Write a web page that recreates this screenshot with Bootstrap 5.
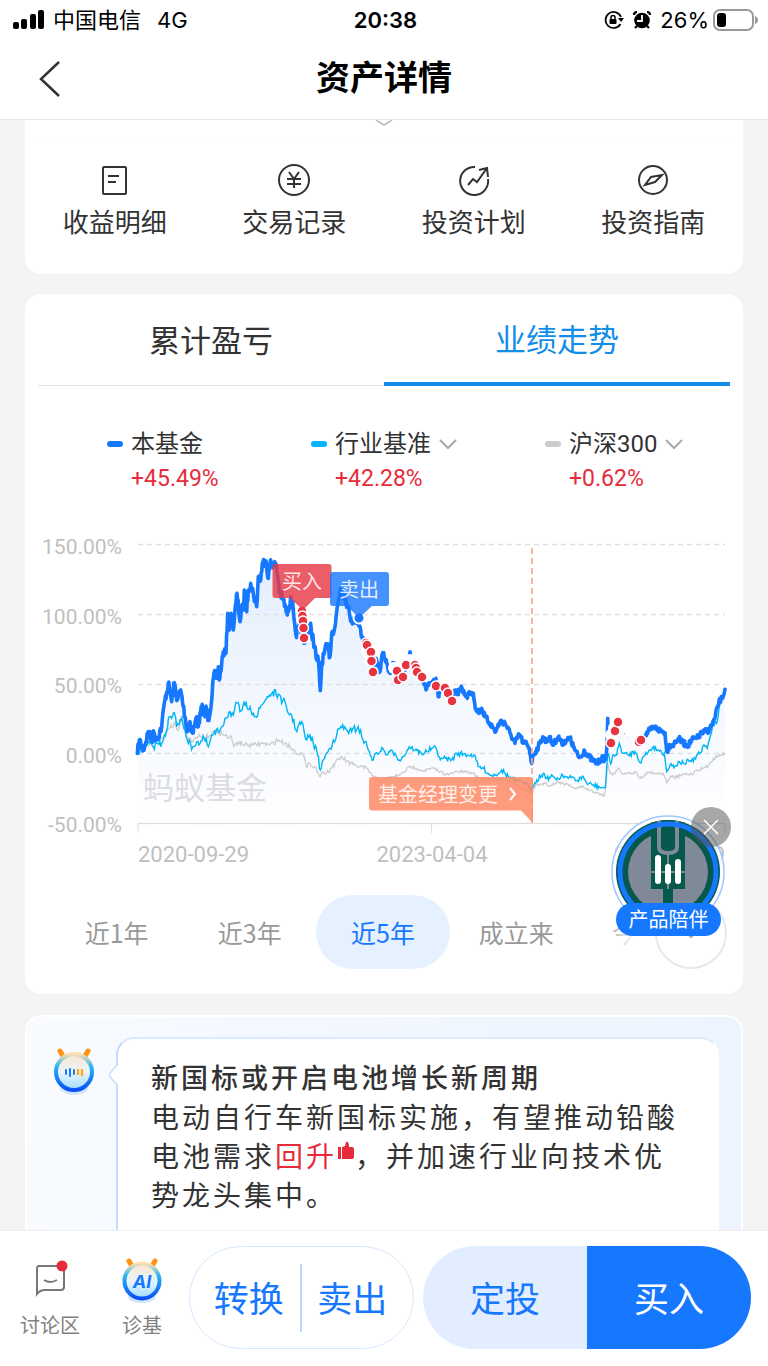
<!DOCTYPE html>
<html lang="zh-CN">
<head>
<meta charset="utf-8">
<meta name="viewport" content="width=device-width, initial-scale=1">
<title>资产详情</title>
<link href="https://cdn.jsdelivr.net/npm/bootstrap@5.3.0/dist/css/bootstrap.min.css" rel="stylesheet">
<style>
  :root { --blue: #1677ff; --tab: #108ee9; --red: #e62c3b; --ink: #333; }
  body { font-family: Inter, "Noto Sans CJK SC", sans-serif; color: var(--ink); background: #f4f4f4; line-height: 1; }
  a { color: inherit; text-decoration: none; }
  button { background: none; border: 0; padding: 0; color: inherit; }
  svg { display: block; flex: none; }
  .app { height: 100vh; }
  .status-row { height: 40px; padding: 0 10px 0 13px; font-size: 22px; color: #000; }
  .status-row > div { flex: 1 1 0; }
  .clock { font-weight: 600; }
  .title-row { height: 79px; padding: 0 0 2px 38px; }
  .title-row h1 { font-size: 34px; font-weight: 700; color: #000; }
  .top-area { border-bottom: 1px solid #e5e5e5; }
  .feed { padding: 0 25px; min-height: 0; }
  .panel { background: #fff; border-radius: 16px; margin-bottom: 21px; }
  .panel-first { border-radius: 0 0 16px 16px; height: 154px; margin-bottom: 20px; }
  .fold { height: 21px; border-bottom: 1px solid #fafafa; }
  .shortcut { font-size: 26px; gap: 12px; padding-top: 21px; }
  .perf-tabs { margin: 0 13px; height: 92px; }
  .perf-tabs button { font-size: 31px; padding-top: 2px; border-bottom: 1px solid #e5e5e5; flex: 1 1 0; }
  .perf-tabs button.on { color: var(--tab); border-bottom: 4px solid var(--tab); }
  .legend-grid { display: grid; grid-template-columns: 204fr 234fr 173fr; padding: 44px 25px 0 82px; }
  .legend-name { font: 24px/28px Roboto, "Noto Sans CJK SC", sans-serif; gap: 8px; }
  .legend-rate { font: 23px/28px Roboto, sans-serif; color: var(--red); margin: 7px 0 0 24px; }
  .swatch { width: 16px; height: 6px; border-radius: 3px; }
  .chart { width: 100%; height: auto; margin-top: 37px; }
  .chart text { font-family: Roboto, "Noto Sans CJK SC", sans-serif; }
  .ranges { padding: 0 27px 25px 25px; margin-top: 15px; }
  .ranges button { flex: 1 1 0; height: 74px; border-radius: 37px; font: 25px/28px "Noto Sans CJK SC", sans-serif; color: #999; }
  .ranges button.on { background: #e6f1ff; color: var(--blue); }
  .ranges-fade { right: 16px; bottom: 25px; width: 118px; height: 74px; background: linear-gradient(90deg, rgba(255,255,255,.2), #fff 22%); }
  .more { right: 16px; bottom: 25px; width: 72px; height: 72px; border: 2px solid #e8e8e8 !important; border-radius: 50%; background: #fff !important; }
  .buddy { right: 12px; bottom: 57px; width: 120px; height: 130px; }
  .buddy .tag { left: 5px; bottom: 1px; width: 105px; height: 33px; border-radius: 17px; background: var(--blue); color: #fff; font-size: 20px; }
  .buddy .shut { right: 0; top: 0; width: 40px; height: 40px; border-radius: 50%; background: rgba(80,80,80,.5); }
  .news { background: linear-gradient(100deg, #f9fbff, #f0f6ff 60%, #edf4ff); border: 2px solid #fff; height: 300px; }
  .news .robot { left: 22px; top: 25px; }
  .bubble { margin: 20px 22px 0 89px; padding: 19px 26px 0 33px; height: 260px; background: #fff; border-radius: 18px; border: 2px solid #c5dcff; border-right-color: #fff; border-top-color: #dceaff; }
  .bubble .beak { left: -10px; top: 24px; }
  .bubble h2 { font-size: 27px; line-height: 41px; letter-spacing: 3px; font-weight: 500; margin: 0; }
  .bubble p { font-size: 28px; line-height: 39px; letter-spacing: 3px; margin: 0; }
  .bubble em { color: var(--red); font-style: normal; }
  .dock { background: #fff; border-top: 1px solid #f0f0f0; padding: 15px 17px 17px 4px; }
  .dock-link { width: 92px; font-size: 20px; color: #808080; gap: 10px; padding-top: 8px; }
  .dock-group { height: 103px; border-radius: 52px; font-size: 35px; color: var(--blue); }
  .dock-group button { flex: 1 1 0; padding-top: 4px; }
  .trade { flex: 205 1 0; border: 1px solid #d6e7ff; padding: 0 10px 0 8px; margin: 0 9px 0 1px; }
  .trade i { width: 2px; height: 68px; background: #b9d6ff; }
  .invest { flex: 328 1 0; background: #e2eeff; }
  .invest .buy { background: var(--blue); color: #fff; }
</style>
</head>
<body>
<div class="app d-flex flex-column overflow-hidden">
  <header class="top-area bg-white">
    <div class="status-row d-flex align-items-center">
      <div class="d-flex align-items-center">
        <svg width="32" height="20" viewBox="0 0 32 20" aria-hidden="true"><rect y="12" width="6" height="7" rx="2"/><rect x="8" y="9" width="6" height="10" rx="2"/><rect x="17" y="4" width="6" height="15" rx="2"/><rect x="25" width="6" height="19" rx="2"/></svg>
        <span class="ms-2">中国电信</span><span class="ms-3">4G</span>
      </div>
      <span class="clock">20:38</span>
      <div class="d-flex align-items-center justify-content-end">
        <svg width="20" height="20" viewBox="0 0 20 20" aria-hidden="true"><path d="M16.5 14A8 8 0 1 1 17 7" fill="none" stroke="#000" stroke-width="1.700"/><path d="M14 8h6l-3 4z"/><rect x="5.500" y="9" width="7" height="5" rx="1"/><path d="M7 9V7.500a2 2 0 0 1 4 0V9" fill="none" stroke="#000" stroke-width="1.500"/></svg>
        <svg class="ms-2" width="20" height="20" viewBox="0 0 20 20" aria-hidden="true"><circle cx="10" cy="10.500" r="7.800"/><path d="M2 5q0-3 3-3M18 5q0-3-3-3M5 16l-2 2M15 16l2 2" fill="none" stroke="#000" stroke-width="2.200"/><path d="M10 5v6H5" fill="none" stroke="#fff" stroke-width="1.800"/></svg>
        <span class="ms-2">26%</span>
        <svg class="ms-1" width="45" height="22" viewBox="0 0 45 22" aria-hidden="true"><rect x="1" y="1" width="39" height="20" rx="6" fill="none" stroke="#999" stroke-width="2"/><rect x="4" y="4" width="9" height="14" rx="3"/><path d="M42 7q3 1 3 4t-3 4z" fill="#999"/></svg>
      </div>
    </div>
    <div class="title-row position-relative d-flex align-items-center">
      <a href="#" class="position-relative z-1" aria-label="返回"><svg width="24" height="38" viewBox="0 0 24 38"><path d="M21 2L3 19l18 17" fill="none" stroke="#333" stroke-width="2.500"/></svg></a>
      <h1 class="position-absolute start-0 end-0 text-center m-0">资产详情</h1>
    </div>
  </header>

  <main class="feed flex-fill overflow-hidden">
    <section class="panel panel-first">
      <div class="fold d-flex justify-content-center"><svg width="22" height="8" viewBox="0 0 22 8" aria-hidden="true"><path d="M3 0l8 5 8-5" fill="none" stroke="#bbb" stroke-width="1.500"/></svg></div>
      <nav class="row row-cols-4 g-0">
        <a href="#" class="shortcut col d-flex flex-column align-items-center"><svg width="36" height="36" viewBox="0 0 36 36" fill="none" stroke="#333" stroke-width="2"><rect x="6" y="5" width="23" height="27" rx="1"/><path d="M11 14h11M11 20h8"/></svg><span>收益明细</span></a>
        <a href="#" class="shortcut col d-flex flex-column align-items-center"><svg width="36" height="36" viewBox="0 0 36 36" fill="none" stroke="#333" stroke-width="2"><circle cx="18" cy="18" r="15"/><path d="M13 10l5 7 5-7M11 17h14M11 22h14M18 17v9"/></svg><span>交易记录</span></a>
        <a href="#" class="shortcut col d-flex flex-column align-items-center"><svg width="36" height="36" viewBox="0 0 36 36" fill="none" stroke="#333" stroke-width="2"><path d="M19 5A14 14 0 1 0 32 17M12 23l5-6 4 3L31 6M23 8l8-2 1 9"/></svg><span>投资计划</span></a>
        <a href="#" class="shortcut col d-flex flex-column align-items-center"><svg width="36" height="36" viewBox="0 0 36 36" fill="none" stroke="#333" stroke-width="2"><circle cx="18" cy="18" r="14"/><path d="M27 13l-7 7-10 3 6-8z"/></svg><span>投资指南</span></a>
      </nav>
    </section>

    <section class="panel position-relative">
      <div class="perf-tabs d-flex" role="tablist">
        <button type="button" role="tab">累计盈亏</button>
        <button type="button" role="tab" class="on" aria-selected="true">业绩走势</button>
      </div>
      <div class="legend-grid">
        <div>
          <div class="legend-name d-flex align-items-center"><i class="swatch" style="background:#1677ff"></i>本基金</div>
          <div class="legend-rate">+45.49%</div>
        </div>
        <div>
          <button type="button" class="legend-name d-flex align-items-center"><i class="swatch" style="background:#00b5ff"></i>行业基准<svg width="18" height="12" viewBox="0 0 18 12"><path d="M1 2l8 8 8-8" fill="none" stroke="#aaa" stroke-width="2"/></svg></button>
          <div class="legend-rate">+42.28%</div>
        </div>
        <div>
          <button type="button" class="legend-name d-flex align-items-center"><i class="swatch" style="background:#ccc"></i>沪深300<svg width="18" height="12" viewBox="0 0 18 12"><path d="M1 2l8 8 8-8" fill="none" stroke="#aaa" stroke-width="2"/></svg></button>
          <div class="legend-rate">+0.62%</div>
        </div>
      </div>

      <svg class="chart" viewBox="25 530 718 350" role="img" aria-label="业绩走势图">
        <defs><linearGradient id="shade" x1="0" y1="0" x2="0" y2="1"><stop offset="0" stop-color="#e4eefe"/><stop offset="1" stop-color="#fff"/></linearGradient></defs>
        <path id="area" fill="url(#shade)"/>
        <path d="M138 544.500H725M138 614.500H725M138 684.500H725M138 753.500H725M138 823.500H725" stroke="#e0e0e0" stroke-width="1.500" stroke-dasharray="5 4"/>
        <path d="M138 833V823.500H725V833M431.500 823.500V833" fill="none" stroke="#ddd"/>
        <g font-size="21" fill="#bfbfbf" text-anchor="end"><text x="122" y="554">150.00%</text><text x="122" y="624">100.00%</text><text x="122" y="693">50.00%</text><text x="122" y="763">0.00%</text><text x="122" y="832">-50.00%</text></g>
        <g font-size="22" fill="#bfbfbf"><text x="138" y="862">2020-09-29</text><text x="432" y="862" text-anchor="middle">2023-04-04</text><text x="725" y="862" text-anchor="end">2025-09-29</text></g>
        <text x="143" y="799" font-size="31" fill="#dcdde0">蚂蚁基金</text>
        <path id="csi" fill="none" stroke="#ccc" stroke-width="1.300"/>
        <path id="bench" fill="none" stroke="#00b5f5" stroke-width="1.400"/>
        <path id="fund" fill="none" stroke="#1677ff" stroke-width="3.600" stroke-linejoin="round" stroke-linecap="round"/>
        <g id="erased" fill="#fff"></g>
        <g id="buys" fill="#e63541" stroke="#fff" stroke-width="1.500"></g>
        <circle cx="359" cy="618" r="5.500" fill="#1677ff" stroke="#fff" stroke-width="2"/>
        <path d="M532 548V823" stroke="#f7a58c" stroke-width="1.700" stroke-dasharray="6 4"/>
        <g fill="#e63946" fill-opacity=".82"><rect x="272.500" y="564" width="59" height="34" rx="3"/><path d="M290 598h25l-12 12z"/></g>
        <g fill="#1677ff" fill-opacity=".8"><rect x="330" y="572" width="59" height="34" rx="3"/><path d="M347 606h25l-13 12z"/></g>
        <path d="M372 777H530q3 0 3 3V823L521 810.500H372q-3 0-3-3V780q0-3 3-3z" fill="#ff8a66" fill-opacity=".85"/>
        <g font-size="20" fill="#fff" fill-opacity=".85"><text x="282" y="589">买入</text><text x="339" y="597">卖出</text><text x="378" y="802" font-size="20">基金经理变更</text></g>
        <path d="M510 788l5 6-5 6" fill="none" stroke="#fff" stroke-width="2"/>
      </svg>

      <div class="ranges d-flex">
        <button type="button">近1年</button><button type="button">近3年</button><button type="button" class="on">近5年</button><button type="button">成立来</button><button type="button">今年来</button>
      </div>
      <div class="ranges-fade position-absolute"></div>
      <button type="button" class="more position-absolute d-flex align-items-center justify-content-center" aria-label="更多"><svg width="18" height="12" viewBox="0 0 18 12"><path d="M1 2l8 8 8-8" fill="none" stroke="#aaa" stroke-width="2"/></svg></button>

      <div class="buddy position-absolute">
        <svg class="position-absolute start-0 top-0" width="120" height="130" viewBox="0 0 120 130" aria-hidden="true">
          <defs><clipPath id="disc"><circle cx="57" cy="65" r="52"/></clipPath></defs>
          <circle cx="57" cy="65" r="56" fill="#fff" fill-opacity=".7" stroke="#9fc6ff" stroke-width="1.500"/>
          <g clip-path="url(#disc)"><rect width="120" height="130" fill="#04594a"/><circle cx="57" cy="65" r="40" fill="#808998"/><path d="M40 10h34v72H40z" fill="#04594a"/><path d="M48 10v30q0 6 9 6t9-6V10" fill="none" stroke="#808998" stroke-width="4"/><path d="M57 46v36M40 65h34" stroke="#808998" stroke-width="2"/><path d="M52 82h10v30H52z" fill="#04594a"/></g>
          <circle cx="57" cy="65" r="48" fill="none" stroke="#1677ff" stroke-width="5"/>
          <path d="M47 51v23M57 60v14M67 55v19" stroke="#fff" stroke-width="6" stroke-linecap="round"/>
        </svg>
        <button type="button" class="tag position-absolute">产品陪伴</button>
        <button type="button" class="shut position-absolute d-flex align-items-center justify-content-center" aria-label="关闭"><svg width="16" height="16" viewBox="0 0 16 16"><path d="M1 1l14 14M15 1L1 15" stroke="#fff" stroke-width="1.500"/></svg></button>
      </div>
    </section>

    <section class="panel news position-relative mb-0 overflow-hidden">
      <svg class="robot position-absolute" width="50" height="60" viewBox="0 0 50 60" aria-hidden="true">
        <defs>
          <linearGradient id="ring" x1="0" y1="0" x2="0" y2="1"><stop offset="0" stop-color="#ffe0b0"/><stop offset=".35" stop-color="#28b4f4"/><stop offset="1" stop-color="#0a4ff5"/></linearGradient>
          <linearGradient id="face" x1="0" y1="0" x2="0" y2="1"><stop offset="0" stop-color="#fbe5cb"/><stop offset=".5" stop-color="#eaf5fb"/><stop offset="1" stop-color="#9ddcff"/></linearGradient>
        </defs>
        <ellipse cx="25" cy="46" rx="14" ry="7" fill="#d3e4ff"/>
        <path d="M11 9l4 7M39 9l-4 7" stroke="#ff9414" stroke-width="5" stroke-linecap="round"/>
        <circle cx="25" cy="30" r="18" fill="url(#face)" stroke="url(#ring)" stroke-width="4"/>
        <path d="M17 28v4M21 27v7M25 28v4" stroke="#1677ff" stroke-width="2" stroke-linecap="round"/><path d="M29 28v4M33 28v5" stroke="#ffab1a" stroke-width="2.500" stroke-linecap="round"/>
      </svg>
      <div class="bubble position-relative">
        <svg class="beak position-absolute" width="12" height="24" viewBox="0 0 12 24" aria-hidden="true"><path d="M10 1L3 9q-3 3 0 6l7 8" fill="#fff" stroke="#c5dcff" stroke-width="1.500"/><path d="M10 2h2v20h-2z" fill="#fff"/></svg>
        <h2>新国标或开启电池增长新周期</h2>
        <p>电动自行车新国标实施，有望推动铅酸电池需求<em>回升</em><svg class="d-inline-block align-top" width="18" height="24" viewBox="0 0 18 24" aria-label="赞"><path d="M1 9h3v12H1zM5 9l3-1 1-4q3-1 3 5h3q2 0 2 2v8q0 2-2 2H5z" fill="#e62c3b"/></svg>，并加速行业向技术优势龙头集中。</p>
      </div>
    </section>
  </main>

  <footer class="dock d-flex">
    <a href="#" class="dock-link d-flex flex-column align-items-center"><svg width="50" height="52" viewBox="0 0 50 52" aria-hidden="true"><path d="M14 12h22q3 0 3 3v18q0 3-3 3H20q-5 0-8 4V15q0-3 2-3z" fill="none" stroke="#777" stroke-width="2"/><path d="M19 26q6 4 13 0" fill="none" stroke="#777" stroke-width="2"/><circle cx="37" cy="12" r="5.500" fill="#e62c3b"/></svg><span>讨论区</span></a>
    <a href="#" class="dock-link d-flex flex-column align-items-center"><svg width="50" height="52" viewBox="0 0 50 52" aria-hidden="true"><ellipse cx="25" cy="43" rx="14" ry="6" fill="#d3e4ff"/><path d="M12 7l4 7M38 7l-4 7" stroke="#ff9414" stroke-width="5" stroke-linecap="round"/><circle cx="25" cy="27" r="17.500" fill="url(#face)" stroke="url(#ring)" stroke-width="4"/><text x="25" y="34" text-anchor="middle" font-size="18" font-weight="700" font-style="italic" fill="#1677ff">AI</text></svg><span>诊基</span></a>
    <div class="dock-group trade d-flex align-items-center"><button type="button">转换</button><i></i><button type="button">卖出</button></div>
    <div class="dock-group invest d-flex overflow-hidden"><button type="button">定投</button><button type="button" class="buy">买入</button></div>
  </footer>
</div>
<script src="https://cdn.jsdelivr.net/npm/bootstrap@5.3.0/dist/js/bootstrap.bundle.min.js"></script>
<script>
  // Each block of samples: origin x, origin y, then x,y pairs in thirds of a chart unit.
  const series = {
    fund: [
      [130, 530, "22,670 28,630 40,660 55,605 65,630 72,608 80,630 95,590 103,520 115,460 125,515 133,458 142,510 152,480 165,560 172,605 180,575 188,610 200,560 205,590 215,530 225,560 228,528 235,570 245,510 252,430 260,445 265,410 268,450 275,400 280,365 288,370 293,250 298,300 303,250 310,300 318,215 321,190 330,275 335,235 340,240 343,180 350,245 355,180 362,160 370,190 380,230 385,140 392,150 397,100 408,92 415,145 420,100 432,100 440,115 450,190 460,210 472,255 482,200 490,240 498,315 510,290 522,340 540,285 550,330 560,390 565,390 571,482 576,395 583,370 592,345 600,380 605,310 615,290 622,230 632,175 645,200 652,225 660,260 672,275 680,265 690,290 697,325 710,345 725,390 730,410"],
      [340, 530, "110,390 120,425 128,368 140,400 150,430 160,400 175,455 190,430 200,400 210,365 218,395 228,420 245,440 258,480 270,460 288,445 295,500 305,470 318,480 335,505 345,480 352,490 362,475 375,490 382,505 388,485 400,490 408,540 420,545 425,535 435,560 450,580 467,605 480,575 495,578 510,610 525,640 537,615"],
      [520, 640, "0,285 10,310 20,310 28,325 35,370 40,345 52,325 60,310 68,290 78,305 88,290 98,315 115,290 125,310 140,300 150,295 160,320 175,350 185,350 192,330 205,350 220,362 232,370 245,355 257,358 261,320 263,235 266,300 275,305 285,275 296,245 310,260 330,285 350,290 365,300 375,285 390,270 405,262 420,272 435,278 440,335 450,315 462,312 475,295 490,310 505,315 515,300 530,295 545,280 555,275 568,270 575,255 585,235 592,200 600,180 607,175 615,148"]],
    bench: [
      [130, 530, "22,670 35,650 45,655 60,640 70,650 80,640 95,640 103,615 110,600 118,560 125,565 133,548 140,590 150,570 155,565 165,600 175,640 188,650 200,635 210,640 222,625 235,650 248,615 265,605 275,590 285,565 300,545 310,555 321,518 330,545 345,525 360,530 370,550 380,562 390,535 400,520 412,500 425,490 445,492 455,520 465,515 475,550 485,555 498,600 515,575 525,620 530,630 540,615 550,640 560,660 571,720 580,690 590,670 600,655 610,630 620,615 632,590 650,600 665,605 685,590 695,620 705,635 715,660 730,690 740,668"],
      [340, 530, "120,665 128,655 140,675 150,665 165,670 178,690 190,680 208,650 225,660 245,670 260,665 275,655 288,655 295,680 310,685 335,690 350,670 370,672 385,675 402,675 415,710 430,715 450,735 465,735 485,720 505,740 530,755 545,755 560,760 572,785"],
      [520, 640, "36,440 50,420 70,400 80,415 100,410 118,418 125,402 145,415 160,412 170,422 190,410 200,430 220,435 240,442 256,443 259,400 263,340 272,372 278,345 290,345 298,310 308,340 325,345 345,335 350,340 360,368 375,345 390,330 400,320 415,330 433,340 440,395 450,375 465,378 478,365 490,370 510,362 520,365 530,345 545,335 552,315 562,325 572,285 580,250 590,250 600,190 615,150"]],
    csi: [
      [130, 530, "22,670 40,650 60,640 80,630 100,625 115,595 135,580 145,600 155,560 165,600 175,625 190,635 205,620 225,625 250,605 265,605 280,615 305,625 312,650 325,635 345,645 370,645 395,640 420,645 445,630 465,640 480,650 495,665 515,670 525,690 530,715 540,700 555,710 571,740 580,725 595,725 615,700 635,680 650,695 670,705 690,710 710,715 725,735 745,750"],
      [340, 530, "125,755 140,745 160,740 180,735 210,710 230,715 250,722 280,715 300,725 325,735 350,725 370,725 400,730 420,745 440,750 480,745 510,755 535,770 560,780 574,795"],
      [520, 640, "36,455 50,435 75,430 90,437 115,425 130,430 150,435 165,445 190,440 210,452 235,458 252,468 258,440 263,370 270,400 280,403 297,385 305,400 330,398 350,398 360,415 375,403 390,395 405,400 430,400 440,428 450,410 470,412 490,403 515,402 530,390 550,385 565,378 580,355 600,345 615,340"]]
  };
  let seed = 7;
  const rand = () => (seed = (seed * 16807) % 2147483647) / 2147483647 - .5;
  function trace(blocks, ripple, step) {
    const pts = blocks.flatMap(([ox, oy, s]) => s.split(" ").map(p => p.split(",").map(Number)).map(([x, y]) => [ox + x / 3, oy + y / 3]));
    let d = "M" + pts[0].join(" ");
    for (let i = 1; i < pts.length; i++) {
      const [ax, ay] = pts[i - 1], [bx, by] = pts[i];
      const n = Math.max(1, Math.round((bx - ax) / step));
      // Swings were wider before mid 2022 than after.
      const swing = bx < 370 ? ripple * 1.6 : ripple;
      for (let k = 1; k <= n; k++) {
        const t = k / n, r = k < n ? rand() * swing : 0;
        d += "L" + (ax + (bx - ax) * t).toFixed(1) + " " + (ay + (by - ay) * t + r).toFixed(1);
      }
    }
    return d;
  }
  const fundPath = trace(series.fund, 6, .6);
  document.getElementById("fund").setAttribute("d", fundPath);
  document.getElementById("area").setAttribute("d", fundPath + "V823H138Z");
  document.getElementById("bench").setAttribute("d", trace(series.bench, 5, 1));
  document.getElementById("csi").setAttribute("d", trace(series.csi, 3, 1));
  const dots = (id, list, r) => document.getElementById(id).innerHTML = list.map(([x, y]) => `<circle cx="${x}" cy="${y}" r="${r}"/>`).join("");
  dots("erased", [[367,652],[394,668],[398,672],[403,665],[410,660],[441,685],[611,735],[614,728],[620,727],[626,727],[630,731],[634,735],[638,736],[370,660]], 6);
  dots("buys", [[302,611],[302.500,616],[303,621],[303.500,628],[304,638],[366,643],[367,645],[371,652],[371.500,661],[373,672],[397,671],[398,680],[403,677],[406,665],[415,665],[416,668],[417,672],[422,677],[436,686],[445,688],[448,693],[452,701],[611,743],[615,731],[618,722],[639,742],[641,740]], 5);
</script>
</body>
</html>
